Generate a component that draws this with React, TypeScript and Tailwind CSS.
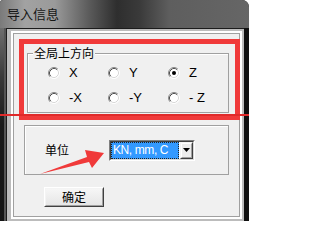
import React from 'react'

const cjk = "font-['Noto_Sans_CJK_SC',sans-serif]"

function Radio({ label, checked }: { label: string; checked?: boolean }) {
  return (
    <label className="flex h-[13px] w-[60px] items-center gap-[9px]">
      <svg width="12" height="12" viewBox="0 0 12 12" className="shrink-0">
        <circle cx="6" cy="6" r="5" fill="#fff" />
        <path d="M2.11 9.89A5.5 5.5 0 0 1 9.89 2.11" fill="none" stroke="#8a8a8a" />
        <path d="M9.89 2.11A5.5 5.5 0 0 1 2.11 9.89" fill="none" stroke="#ffffff" />
        <path d="M2.82 9.18A4.5 4.5 0 0 1 9.18 2.82" fill="none" stroke="#505050" />
        <path d="M9.18 2.82A4.5 4.5 0 0 1 2.82 9.18" fill="none" stroke="#d8d8d8" />
        {checked && <circle cx="6" cy="6" r="2" fill="#000" />}
      </svg>
      <span className="text-[13px] leading-[13px] text-black">{label}</span>
    </label>
  )
}

export default function App() {
  return (
    <div className="relative h-[221px] w-[249px] overflow-hidden bg-white font-['Liberation_Sans','Noto_Sans_CJK_SC',sans-serif]">
      <div className="flex h-full w-full flex-col overflow-hidden rounded-tl-[3px] rounded-tr-[7px] bg-[#141414]">
        {/* Title bar */}
        <div className="flex h-[28px] shrink-0 items-center bg-[linear-gradient(90deg,#7a7a7a_0%,#a2a2a2_10%,#9a9a9a_22%,#5a5a5a_36%,#2e2e2e_47%,#3a3a3a_56%,#5e5e5e_68%,#666666_100%)] pl-[7px]">
          <span className={`${cjk} text-[13px] leading-[14px] text-[#161616]`}>导入信息</span>
        </div>

        <div className="flex min-h-0 flex-1">
          <div className="w-[6px] bg-[linear-gradient(180deg,#6e6e6e_0%,#3a3a3a_25%,#1a1a1a_50%,#141414_100%)] shadow-[inset_-2px_0_0_#555555]" />

          {/* Frame */}
          <div className="flex flex-1 border-l border-t border-[#1c1c1c] bg-[#bcbcbc] pb-[2px] pl-[4px] pr-[2px] pt-[2px]">
            <div className="flex-1 border-2 border-white">
              <div className="flex h-full flex-col items-start border border-[#a0a0a0] bg-[#f0f0f0]">
                {/* 全局上方向 */}
                <div className="relative ml-[13px] mt-[19px] h-[60px] w-[202px] border border-[#a0a0a0] shadow-[inset_1px_1px_0_#ffffff]">
                  <span className={`${cjk} absolute left-[5px] top-[-8px] bg-[#f0f0f0] px-[1px] text-[12px] leading-[14px] text-black`}>
                    全局上方向
                  </span>
                  <div className="flex flex-col gap-[12px] pl-[20px] pt-[12px]">
                    <div className="flex">
                      <Radio label="X" />
                      <Radio label="Y" />
                      <Radio label="Z" checked />
                    </div>
                    <div className="flex">
                      <Radio label="-X" />
                      <Radio label="-Y" />
                      <Radio label="- Z" />
                    </div>
                  </div>
                </div>

                {/* 单位 */}
                <div className="ml-[10px] mt-[12px] flex h-[50px] w-[205px] items-center border border-[#a0a0a0] pl-[20px] shadow-[inset_1px_1px_0_#ffffff]">
                  <span className={`${cjk} w-[64px] shrink-0 text-[12px] leading-[14px] text-black`}>单位</span>
                  <div className="h-[21px] w-[86px] border border-b-white border-l-[#808080] border-r-white border-t-[#808080]">
                    <div className="flex h-full border border-b-[#d8d8d8] border-l-[#404040] border-r-[#d8d8d8] border-t-[#404040] bg-white">
                      <div className="flex h-full w-[68px] items-center border border-dotted border-[#222] bg-[#3399ff] pl-[1px]">
                        <span className="whitespace-nowrap text-[12px] leading-[13px] tracking-[-0.4px] text-white">KN, mm, C</span>
                      </div>
                      <div className="ml-[1px] flex-1 border border-b-[#404040] border-l-[#f4f4f4] border-r-[#404040] border-t-[#f4f4f4]">
                        <div className="flex h-full items-center justify-center border border-b-[#a0a0a0] border-l-white border-r-[#a0a0a0] border-t-white bg-[#ececec]">
                          <svg width="7" height="4" viewBox="0 0 7 4">
                            <polygon points="0,0 7,0 3.5,4" fill="#000" />
                          </svg>
                        </div>
                      </div>
                    </div>
                  </div>
                </div>

                {/* 确定 */}
                <button
                  type="button"
                  className="ml-[30px] mt-[12px] h-[20px] w-[60px] border border-b-[#404040] border-l-white border-r-[#404040] border-t-white"
                >
                  <div className={`${cjk} flex h-full items-center justify-center border border-b-[#a0a0a0] border-l-[#f4f4f4] border-r-[#a0a0a0] border-t-[#f4f4f4] bg-[linear-gradient(180deg,#f6f6f6,#e6e6e6)] text-[12px] leading-[14px] text-black`}>
                    确定
                  </div>
                </button>
              </div>
            </div>
          </div>

          <div className="w-[5px] bg-[#101010]" />
        </div>
      </div>

      {/* Red annotations */}
      <div className="pointer-events-none absolute left-[19px] top-[39px] h-[81px] w-[221px] border-[5px] border-[#f03a3a]" />
      <div className="pointer-events-none absolute left-0 top-[114px] h-[2px] w-full bg-[#e02a2a]" />
      <svg className="pointer-events-none absolute left-0 top-0" width="249" height="221" viewBox="0 0 249 221">
        <polygon points="40,174 87,157 85,150 104,153 92,168 89,162" fill="#f03a3a" />
      </svg>
    </div>
  )
}
